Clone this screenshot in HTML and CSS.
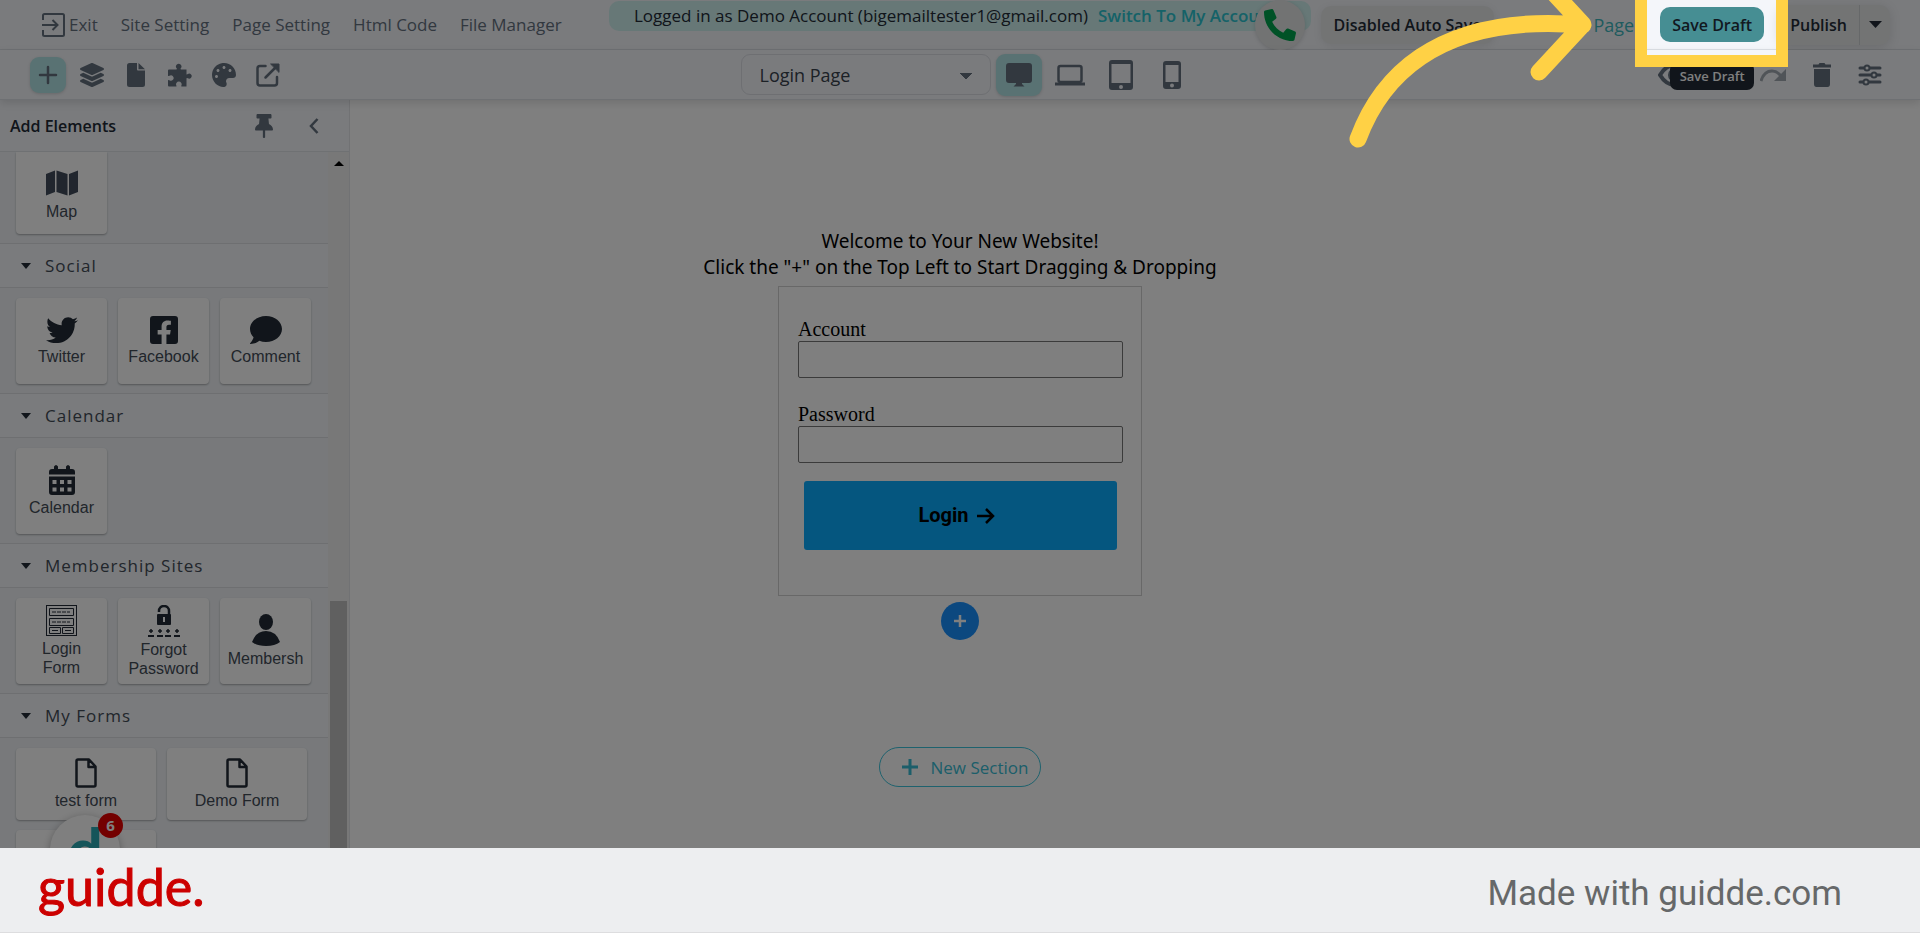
FILE: index.html
```html
<!DOCTYPE html>
<html lang="en">
<head>
    <meta charset="UTF-8">
    <meta name="viewport" content="width=device-width, initial-scale=1.0">
    <title>Login Page - Site Builder</title>
    <link rel="stylesheet" href="styles.css">
</head>
<body>
<div class="stage">
    <header class="topbar">
        <nav class="menu">
            <a href="#" class="exit">
                <svg width="23" height="24" viewBox="0 0 23 24" fill="none" stroke="currentColor" stroke-width="2"><path d="M1 7V2.500Q1 1 2.500 1H20.500Q22 1 22 2.500V21.500Q22 23 20.500 23H2.500Q1 23 1 21.500V17M0 12H15M10.500 7L15.500 12L10.500 17"/></svg>Exit</a>
            <a href="#">Site Setting</a>
            <a href="#">Page Setting</a>
            <a href="#">Html Code</a>
            <a href="#">File Manager</a>
        </nav>
        <div class="account">
            <span>Logged in as Demo Account (bigemailtester1@gmail.com)</span>
            <a href="#">Switch To My Account</a>
            <button class="call" aria-label="Call">
                <svg width="32" height="32" viewBox="0 0 512 512" fill="currentColor"><path transform="translate(512 0) scale(-1 1)" d="M493.400 24.600l-104-24c-11.300-2.600-22.900 3.300-27.500 13.900l-48 112c-4.200 9.800-1.400 21.300 6.900 28l60.600 49.600c-36 76.700-98.900 140.500-177.200 177.200l-49.600-60.600c-6.800-8.300-18.200-11.100-28-6.900l-112 48C3.900 366.500-2 378.100.6 389.400l24 104C27.100 504.200 36.700 512 48 512c256.100 0 464-207.500 464-464 0-11.200-7.700-20.900-18.600-23.400z"/></svg>
            </button>
        </div>
        <div class="actions">
            <button class="auto-save">Disabled Auto Save</button>
            <a href="#" class="page-link">Page</a>
            <div class="save">
                <button class="save-btn">Save Draft</button>
                <span class="tooltip" role="tooltip">Save Draft</span>
                <div class="spotlight"></div>
                <svg class="arrow" width="260" height="160" viewBox="0 0 260 160" fill="none" stroke="#ffd145" stroke-width="17" stroke-linecap="round" stroke-linejoin="round"><path d="M18 139C38 85 90 12 243 25M199 -23L243 24.500L199 72"/></svg>
            </div>
            <div class="publish">
                <button>Publish</button>
                <button class="more" aria-label="More publish options"><svg width="13" height="7" viewBox="0 0 13 7" fill="currentColor"><path d="M0 0H13L6.500 7Z"/></svg></button>
            </div>
        </div>
    </header>

    <div class="toolbar">
        <div class="tools">
            <button class="active" aria-label="Add"><svg width="20" height="20" viewBox="0 0 20 20" stroke="currentColor" stroke-width="2.500" stroke-linecap="round"><path d="M10 2V18M2 10H18"/></svg></button>
            <button aria-label="Layers"><svg width="24" height="24" viewBox="0 0 512 512" fill="currentColor"><path d="M12.410 148.020l232.940 105.670c6.800 3.090 14.490 3.090 21.290 0l232.940-105.670c16.550-7.510 16.550-32.520 0-40.030L266.650 2.310a25.600 25.600 0 0 0-21.290 0L12.410 107.980c-16.550 7.510-16.550 32.530 0 40.040zm487.180 88.280l-58.090-26.330-161.640 73.270c-7.560 3.430-15.590 5.170-23.860 5.170s-16.290-1.740-23.860-5.170L70.510 209.970l-58.100 26.330c-16.550 7.500-16.550 32.500 0 40l232.940 105.590c6.800 3.080 14.490 3.080 21.290 0L499.590 276.300c16.550-7.500 16.550-32.500 0-40zm0 127.800l-57.870-26.230-161.860 73.370c-7.560 3.430-15.590 5.170-23.860 5.170s-16.290-1.740-23.860-5.170L70.290 337.870 12.410 364.100c-16.550 7.500-16.550 32.500 0 40l232.940 105.590c6.800 3.080 14.490 3.080 21.290 0L499.590 404.100c16.550-7.500 16.550-32.500 0-40z"/></svg></button>
            <button aria-label="Pages"><svg width="18" height="24" viewBox="0 0 18 24" fill="currentColor"><path d="M2.500 0H10V6.500Q10 7.500 11 7.500H18V21.500Q18 24 15.500 24H2.500Q0 24 0 21.500V2.500Q0 0 2.500 0ZM11.500 0L18 6.200H11.500Z"/></svg></button>
            <button aria-label="Plugins"><svg width="24" height="24" viewBox="0 0 24 24" fill="currentColor"><path d="M1 6.500H8.500Q9 6 8.700 5.300A2.700 2.700 0 1 1 12.700 5.300Q12.400 6 13 6.500H18.500V11.200Q19 11.800 19.800 11A2.500 2.500 0 1 1 19.800 15.200Q19 14.700 18.500 15.300V23.500H13.500Q12.900 23 13.500 22.200A2.800 2.800 0 1 0 8.200 22.200Q8.800 23 8.300 23.500H1Q0 23.500 0 22.500V17.200Q.6 16.600 1.400 17.200A2.700 2.700 0 1 0 1.400 12.700Q.6 13.300 0 12.800V7.500Q0 6.500 1 6.500Z"/></svg></button>
            <button aria-label="Theme"><svg width="24" height="24" viewBox="0 0 512 512" fill="currentColor"><path d="M204.300 5C104.900 24.400 24.800 104.300 5.200 203.400c-37 187 131.700 326.400 258.800 306.700 41.200-6.400 61.400-54.600 42.500-91.700-23.100-45.400 9.900-98.400 60.900-98.400h79.700c35.800 0 64.800-29.600 64.900-65.300C511.500 97.100 368.100-26.900 204.300 5zM96 320c-17.700 0-32-14.300-32-32s14.300-32 32-32 32 14.300 32 32-14.300 32-32 32zm32-128c-17.700 0-32-14.300-32-32s14.300-32 32-32 32 14.300 32 32-14.300 32-32 32zm128-64c-17.700 0-32-14.300-32-32s14.300-32 32-32 32 14.300 32 32-14.300 32-32 32zm128 64c-17.700 0-32-14.300-32-32s14.300-32 32-32 32 14.300 32 32-14.300 32-32 32z"/></svg></button>
            <button aria-label="Open site"><svg width="24" height="24" viewBox="0 0 24 24" fill="none" stroke="currentColor" stroke-width="2.500" stroke-linecap="round" stroke-linejoin="round"><path d="M9.500 3H4Q1.500 3 1.500 5.500V20Q1.500 22.500 4 22.500H18.500Q21 22.500 21 20V14M9.500 14.500L20 4"/><path d="M15 1H23V9Z" fill="currentColor" stroke-width="1"/></svg></button>
        </div>
        <div class="devices">
            <select aria-label="Page">
                <option>Login Page</option>
            </select>
            <button class="active" aria-label="Desktop"><svg width="26" height="24" viewBox="0 0 26 24" fill="currentColor"><path d="M3 0H23Q26 0 26 3V17Q26 20 23 20H16V21L18.500 23.500H7.500L10 21V20H3Q0 20 0 17V3Q0 0 3 0Z"/></svg></button>
            <button aria-label="Laptop"><svg width="30" height="22" viewBox="0 0 30 22" fill="none" stroke="currentColor"><rect x="3.500" y="2" width="23" height="16" rx="2" stroke-width="2.500"/><path d="M0 20H30" stroke-width="3"/></svg></button>
            <button aria-label="Tablet"><svg width="24" height="30" viewBox="0 0 24 30" fill="currentColor" fill-rule="evenodd"><path d="M3 0H21Q24 0 24 3V27Q24 30 21 30H3Q0 30 0 27V3Q0 0 3 0ZM2.500 4V23H21.500V4ZM12 25A2 2 0 1 0 12 29A2 2 0 1 0 12 25Z"/></svg></button>
            <button aria-label="Phone"><svg width="18" height="28" viewBox="0 0 18 28" fill="currentColor" fill-rule="evenodd"><path d="M3 0H15Q18 0 18 3V25Q18 28 15 28H3Q0 28 0 25V3Q0 0 3 0ZM2.500 4V21H15.500V4ZM9 22.500A2 2 0 1 0 9 26.500A2 2 0 1 0 9 22.500Z"/></svg></button>
        </div>
        <div class="history">
            <button aria-label="Preview"><svg width="34" height="24" viewBox="0 0 34 24" fill="none" stroke="currentColor" stroke-width="4"><path d="M2 12Q8 2 17 2T32 12Q26 22 17 22T2 12Z"/><circle cx="17" cy="12" r="5"/></svg></button>
            <button class="off" aria-label="Redo"><svg width="26" height="14" viewBox="0 0 26 14" fill="none" stroke="currentColor" stroke-width="3"><path d="M1 13Q4 3 12 3Q17 3 21 8"/><path d="M26 1V13H14Z" fill="currentColor" stroke="none"/></svg></button>
            <button aria-label="Delete"><svg width="18" height="24" viewBox="0 0 18 24" fill="currentColor"><path d="M0 1.500H5.500L6.500 0H11.500L12.500 1.500H18V4.500H0ZM1 6H17V21Q17 24 14.500 24H3.500Q1 24 1 21Z"/></svg></button>
            <button aria-label="Options"><svg width="24" height="22" viewBox="0 0 24 22" fill="#f4f6fa" stroke="currentColor" stroke-width="3" stroke-linecap="round"><path d="M2 4H22M2 11H22M2 18H22"/><g stroke-width="2"><circle cx="9" cy="4" r="2.500"/><circle cx="16" cy="11" r="2.500"/><circle cx="8" cy="18" r="2.500"/></g></svg></button>
        </div>
    </div>

    <div class="workspace">
        <aside class="sidebar">
            <div class="side-head">
                <h2>Add Elements</h2>
                <button aria-label="Pin"><svg width="18" height="24" viewBox="0 0 384 512" fill="currentColor"><path d="M298 214L286 96H328c13 0 24-11 24-24V24c0-13-11-24-24-24H56C43 0 32 11 32 24v48c0 13 11 24 24 24h42L86 214C37 237 0 277 0 328c0 13 11 24 24 24h144V490c0 28 48 28 48 0V352h144c13 0 24-11 24-24 0-51-38-91-86-114z"/></svg></button>
                <button aria-label="Collapse"><svg width="10" height="16" viewBox="0 0 10 16" fill="none" stroke="currentColor" stroke-width="2.500"><path d="M8.500 1L2 8L8.500 15"/></svg></button>
            </div>
            <div class="side-body">
                <div class="groups">
                    <div class="tiles first">
                        <button class="tile"><svg width="32" height="26" viewBox="0 0 32 26" fill="#434d5c"><path d="M0 4L9 .5V22L0 25.500ZM10.500 .5L21.500 4V25.500L10.500 22ZM23 4L32 .5V22L23 25.500Z"/></svg><span>Map</span></button>
                    </div>
                    <h3>Social</h3>
                    <div class="tiles">
                        <button class="tile"><svg width="32" height="28" viewBox="0 30 512 448" fill="currentColor"><path d="M459.370 151.716c.325 4.548.325 9.097.325 13.645 0 138.720-105.583 298.558-298.558 298.558-59.452 0-114.680-17.219-161.137-47.106 8.447.974 16.568 1.299 25.340 1.299 49.055 0 94.213-16.568 130.274-44.832-46.132-.975-84.792-31.188-98.112-72.772 6.498.974 12.995 1.624 19.818 1.624 9.421 0 18.843-1.300 27.614-3.573-48.081-9.747-84.143-51.980-84.143-102.985v-1.299c13.969 7.797 30.214 12.670 47.431 13.319-28.264-18.843-46.781-51.005-46.781-87.391 0-19.492 5.197-37.360 14.294-52.954 51.655 63.675 129.300 105.258 216.365 109.807-1.624-7.797-2.599-15.918-2.599-24.040 0-57.828 46.782-104.934 104.934-104.934 30.213 0 57.502 12.670 76.670 33.137 23.715-4.548 46.456-13.320 66.599-25.340-7.798 24.366-24.366 44.833-46.132 57.827 21.117-2.273 41.584-8.122 60.426-16.243-14.292 20.791-32.161 39.308-52.628 54.253z"/></svg><span>Twitter</span></button>
                        <button class="tile"><svg width="28" height="28" viewBox="0 32 448 448" fill="currentColor"><path d="M400 32H48A48 48 0 0 0 0 80v352a48 48 0 0 0 48 48h137.250V327.690h-63V256h63v-54.640c0-62.150 37-96.480 93.670-96.480 27.140 0 55.520 4.840 55.520 4.840v61h-31.270c-30.810 0-40.420 19.120-40.420 38.730V256h68.780l-11 71.690h-57.780V480H400a48 48 0 0 0 48-48V80a48 48 0 0 0-48-48z"/></svg><span>Facebook</span></button>
                        <button class="tile"><svg width="32" height="28" viewBox="0 32 512 448" fill="currentColor"><path d="M256 32C114.600 32 0 125.100 0 240c0 49.600 21.400 95 57 130.700C44.500 421.100 2.700 466 2.200 466.500c-2.200 2.300-2.800 5.700-1.500 8.700S4.800 480 8 480c66.300 0 116-31.800 140.600-51.400 32.700 12.300 69 19.400 107.400 19.400 141.400 0 256-93.100 256-208S397.400 32 256 32z"/></svg><span>Comment</span></button>
                    </div>
                    <h3>Calendar</h3>
                    <div class="tiles">
                        <button class="tile"><svg width="26" height="30" viewBox="0 0 26 30" fill="currentColor" fill-rule="evenodd"><path d="M3 4H5V1.500Q7 -1.500 9 1.500V4H17V1.500Q19 -1.500 21 1.500V4H23Q26 4 26 7V9.500H0V7Q0 4 3 4ZM0 11.500H26V27Q26 30 23 30H3Q0 30 0 27ZM3.500 15V19H7.500V15ZM11 15V19H15V15ZM18.500 15V19H22.500V15ZM3.500 22.500V26.500H7.500V22.500ZM11 22.500V26.500H15V22.500ZM18.500 22.500V26.500H22.500V22.500Z"/></svg><span>Calendar</span></button>
                    </div>
                    <h3>Membership Sites</h3>
                    <div class="tiles">
                        <button class="tile"><svg width="31" height="31" viewBox="0 0 31 31" fill="none" stroke="currentColor"><rect x=".5" y=".5" width="30" height="30"/><path d="M3.500 3.500H27.500V10.500H3.500ZM3.500 13.500H27.500V20.500H3.500ZM3.500 22.500H14.500V28.500H3.500ZM16.500 22.500H27.500V28.500H16.500Z"/><path stroke-dasharray="4 1" d="M6 7H24M6 17H24"/><path d="M6 25.500H12M19 25.500H25"/></svg><span>Login Form</span></button>
                        <button class="tile"><svg width="32" height="32" viewBox="0 0 32 32" fill="none" stroke="currentColor"><path d="M11 7V6A5 5 0 0 1 21 6V10" stroke-width="2.500"/><rect x="9" y="9" width="14" height="11" rx="1" fill="currentColor" stroke="none"/><path d="M16 12V17" stroke="#fff" stroke-width="2"/><path stroke-width="2" d="M0 31H6M9 31H15M17 31H23M26 31H32"/><path stroke-width="1.500" d="M1 26H5M3 24V28M10 26H14M12 24V28M18 26H22M20 24V28M27 26H31M29 24V28"/></svg><span>Forgot Password</span></button>
                        <button class="tile"><svg width="28" height="32" viewBox="0 0 28 32" fill="currentColor"><ellipse cx="14" cy="8" rx="7" ry="8"/><path d="M0 28Q4 17 14 17T28 28Q23 32 14 32T0 28Z"/></svg><span>Membersh</span></button>
                    </div>
                    <h3>My Forms</h3>
                    <div class="tiles wide">
                        <button class="tile"><svg width="22" height="30" viewBox="0 0 22 30" fill="none" stroke="currentColor" stroke-width="2.500" stroke-linejoin="round"><path d="M1.500 3Q1.500 1.500 3 1.500H14L20.500 8.500V27Q20.500 28.500 19 28.500H3Q1.500 28.500 1.500 27ZM13.500 2V9H20.500"/></svg><span>test form</span></button>
                        <button class="tile"><svg width="22" height="30" viewBox="0 0 22 30" fill="none" stroke="currentColor" stroke-width="2.500" stroke-linejoin="round"><path d="M1.500 3Q1.500 1.500 3 1.500H14L20.500 8.500V27Q20.500 28.500 19 28.500H3Q1.500 28.500 1.500 27ZM13.500 2V9H20.500"/></svg><span>Demo Form</span></button>
                        <button class="tile" aria-label="Form"></button>
                    </div>
                </div>
                <div class="scrollbar">
                    <svg width="10" height="5" viewBox="0 0 10 5"><path d="M0 5L5 0L10 5Z"/></svg>
                    <div class="thumb"></div>
                </div>
            </div>
        </aside>

        <main class="canvas">
            <p class="welcome">Welcome to Your New Website!<br>Click the "+" on the Top Left to Start Dragging &amp; Dropping</p>
            <form class="login">
                <label for="account">Account</label>
                <input type="text" id="account">
                <label for="password">Password</label>
                <input type="password" id="password">
                <button type="button">Login <svg width="18" height="16" viewBox="0 0 18 16" fill="none" stroke="currentColor" stroke-width="2.500"><path d="M0 8H16M9 1L16 8L9 15"/></svg></button>
            </form>
            <button class="add-row" aria-label="Add row"><svg width="12" height="12" viewBox="0 0 12 12" stroke="currentColor" stroke-width="2.500"><path d="M6 0V12M0 6H12"/></svg></button>
            <button class="new-section"><svg width="16" height="16" viewBox="0 0 16 16" stroke="currentColor" stroke-width="3"><path d="M8 0V16M0 8H16"/></svg>New Section</button>
        </main>
    </div>

    <button class="chat" aria-label="Open chat">d<span class="badge">6</span></button>
</div>

<footer class="footer">
    <a href="#" class="brand">guidde.</a>
    <span>Made with guidde.com</span>
</footer>
</body>
</html>
```
FILE: styles.css
```css
* {
    box-sizing: border-box;
}

body {
    margin: 0;
    height: 100vh;
    display: flex;
    flex-direction: column;
    font-family: "Open Sans", "Noto Sans", sans-serif;
    font-size: 16px;
    color: #222b36;
    overflow: hidden;
}

a {
    text-decoration: none;
    color: inherit;
}

button {
    border: 0;
    padding: 0;
    background: none;
    font: inherit;
    color: inherit;
    cursor: pointer;
}

svg {
    flex: none;
}

.stage {
    position: relative;
    flex: 1;
    min-height: 0;
    display: flex;
    flex-direction: column;
    overflow: hidden;
    background: #fff;
}

/* top bar */
.topbar,
.toolbar {
    display: grid;
    grid-template-columns: 1fr auto 1fr;
    align-items: center;
    height: 50px;
    flex: none;
    background: #f4f6fa;
    border-bottom: 1px solid #dde1e6;
    color: #64717f;
}

.menu {
    display: flex;
    align-items: center;
    gap: 23px;
    padding-left: 42px;
    font-size: 17px;
    white-space: nowrap;
}

.exit {
    display: flex;
    align-items: center;
    gap: 4px;
}

.account {
    position: relative;
    display: flex;
    align-items: center;
    align-self: start;
    gap: 10px;
    width: 702px;
    height: 30px;
    margin-top: 1px;
    padding: 0 0 1px 25px;
    border-radius: 10px;
    background: #cef0ee;
    color: #222b36;
    font-size: 17px;
    white-space: nowrap;
}

.account a {
    color: #2ac4d0;
    font-weight: 600;
}

.call {
    position: absolute;
    right: 6px;
    top: -1px;
    width: 50px;
    height: 50px;
    display: grid;
    place-items: center;
    border-radius: 50%;
    background: #e4e6e6;
    color: #00a44f;
    box-shadow: 0 1px 4px rgba(0, 0, 0, 0.15);
}

.actions {
    display: flex;
    align-items: center;
    padding: 0 30px 0 10px;
    font-weight: 600;
    color: #222b36;
    white-space: nowrap;
}

.auto-save {
    width: 173px;
    height: 38px;
    margin-right: auto;
    border-radius: 10px;
    background: #e6e8e9;
    box-shadow: 0 2px 8px rgba(0, 0, 0, 0.08);
}

.page-link {
    margin-right: 26px;
    color: #3fb6be;
    font-weight: 400;
    font-size: 18px;
}

.save {
    position: relative;
    margin-right: 14px;
}

.save-btn {
    display: block;
    width: 104px;
    height: 35px;
    border-radius: 10px;
    background: #468e93;
    color: #12181f;
}

.tooltip {
    position: absolute;
    top: 55px;
    left: 10px;
    width: 84px;
    padding: 4px 0;
    border-radius: 7px;
    background: #222b36;
    color: #fff;
    font-size: 13px;
    line-height: 20px;
    text-align: center;
    z-index: 5;
}

/* lit box, everything outside it is dimmed */
.spotlight {
    position: absolute;
    top: -24px;
    left: -25px;
    width: 153px;
    height: 84px;
    border: 12px solid #ffd145;
    box-shadow: 0 0 0 3000px rgba(0, 0, 0, 0.5);
    pointer-events: none;
    z-index: 10;
}

.arrow {
    position: absolute;
    top: -7px;
    right: 164px;
    z-index: 11;
    pointer-events: none;
}

.publish {
    display: flex;
    height: 40px;
    border-radius: 10px;
    background: #e6e8e9;
    box-shadow: 0 2px 12px rgba(0, 0, 0, 0.12);
}

.publish button {
    padding: 0 12px;
}

.publish .more {
    width: 31px;
    padding: 0;
    border-left: 1px solid #cdd0d2;
    display: grid;
    place-items: center;
}

/* second bar */
.toolbar {
    box-shadow: 0 3px 8px rgba(0, 0, 0, 0.12);
    position: relative;
}

.tools,
.devices,
.history {
    display: flex;
    align-items: center;
}

.tools button,
.devices button,
.history button {
    display: grid;
    place-items: center;
}

.tools {
    gap: 8px;
    padding-left: 30px;
}

.tools button {
    width: 36px;
    height: 36px;
    border-radius: 9px;
}

.toolbar .active {
    background: #b3e4e6;
    box-shadow: 0 1px 3px rgba(0, 0, 0, 0.15);
}

.devices {
    gap: 5px;
    padding-left: 15px;
}

.devices button {
    width: 46px;
    height: 42px;
    border-radius: 9px;
}

.devices select {
    appearance: none;
    width: 250px;
    height: 41px;
    padding: 0 18px;
    border: 1px solid #dcdfe5;
    border-radius: 9px;
    background: linear-gradient(to bottom right, #64717f 50%, transparent 51%) 224px 18px / 6px 6px no-repeat,
        linear-gradient(to bottom left, #64717f 50%, transparent 51%) 218px 18px / 6px 6px no-repeat,
        #f4f6fa;
    color: #39424d;
    font-family: inherit;
    font-size: 18px;
}

.history {
    justify-content: flex-end;
    padding-right: 38px;
}

.history button {
    margin-left: 27px;
}

.history .off {
    margin-left: 68px;
    color: #a0a8b0;
}

/* sidebar */
.workspace {
    flex: 1;
    min-height: 0;
    display: flex;
}

.sidebar {
    width: 350px;
    display: flex;
    flex-direction: column;
    background: #f4f6fa;
    border-right: 1px solid #e2e4e8;
}

.side-head {
    display: flex;
    align-items: center;
    flex: none;
    height: 52px;
    padding: 0 30px 0 10px;
    border-bottom: 1px solid #dfe2e6;
    color: #64717f;
}

.side-head h2 {
    margin: 0;
    flex: 1;
    font-size: 16px;
    font-weight: 600;
    color: #222b36;
}

.side-head button {
    margin-left: 36px;
    line-height: 0;
}

.side-body {
    flex: 1;
    min-height: 0;
    display: flex;
    overflow: hidden;
}

.groups {
    flex: 1;
}

.groups h3 {
    display: flex;
    align-items: center;
    gap: 14px;
    margin: 0;
    height: 45px;
    padding-left: 21px;
    border-top: 1px solid #dcdfe3;
    border-bottom: 1px solid #dcdfe3;
    font-size: 17px;
    font-weight: 400;
    letter-spacing: 1px;
    color: #434c57;
}

.groups h3::before {
    content: "";
    border: 5px solid transparent;
    border-top: 6px solid #222b36;
    border-bottom: 0;
}

.tiles {
    display: flex;
    flex-wrap: wrap;
    gap: 10px 11px;
    padding: 10px 0 9px 16px;
    background: #f0f3f7;
}

.tiles.first {
    padding-top: 0;
}

.tile {
    width: 91px;
    height: 86px;
    display: flex;
    flex-direction: column;
    align-items: center;
    justify-content: center;
    gap: 3px;
    padding: 0 7px;
    border-radius: 4px;
    background: #fff;
    box-shadow: 0 1px 2px rgba(0, 0, 0, 0.3);
    font-family: "Liberation Sans", Arial, sans-serif;
    line-height: 19px;
}

.tile span {
    color: #434c57;
}

.first .tile {
    height: 82px;
    gap: 6px;
    padding-top: 5px;
    border-radius: 0 0 4px 4px;
}

.wide .tile {
    width: 140px;
    height: 72px;
}

.scrollbar {
    width: 21px;
    display: flex;
    flex-direction: column;
    align-items: center;
    background: #f1f1f1;
}

.scrollbar svg {
    margin: 9px 0 435px;
}

.thumb {
    flex: 1;
    width: 17px;
    background: #c1c1c1;
}

/* canvas */
.canvas {
    flex: 1;
    display: flex;
    flex-direction: column;
    align-items: center;
    padding: 128px 350px 0 0;
    color: #000;
}

.welcome {
    margin: 0 0 6px;
    font-family: "Noto Sans", sans-serif;
    font-size: 19px;
    line-height: 26px;
    text-align: center;
}

.login {
    width: 364px;
    height: 310px;
    display: flex;
    flex-direction: column;
    padding: 31px 18px 0 19px;
    border: 1px solid #d0d0d0;
    font-family: "Liberation Serif", "Times New Roman", serif;
    font-size: 20px;
    line-height: 23px;
}

.login input {
    height: 37px;
    margin-bottom: 25px;
    border: 1px solid #767676;
    border-radius: 2px;
    background: #fff;
}

.login #password {
    margin-bottom: 18px;
}

.login button {
    height: 69px;
    margin: 0 6px;
    display: flex;
    align-items: center;
    justify-content: center;
    gap: 8px;
    padding-right: 8px;
    border-radius: 3px;
    background: #0aacff;
    font-family: Roboto, sans-serif;
    font-weight: 700;
}

.add-row {
    width: 38px;
    height: 38px;
    margin-top: 6px;
    border-radius: 50%;
    display: grid;
    place-items: center;
    background: #1890ff;
    color: #fff;
}

.new-section {
    display: flex;
    align-items: center;
    gap: 13px;
    height: 40px;
    margin-top: 107px;
    padding: 0 12px 0 22px;
    border: 1px solid #3cc4dc;
    border-radius: 20px;
    color: #38bcd4;
    font-size: 17px;
}

/* chat bubble */
.chat {
    position: absolute;
    left: 50px;
    bottom: -37px;
    width: 70px;
    height: 70px;
    border-radius: 50%;
    background: #fff;
    box-shadow: 0 2px 8px rgba(0, 0, 0, 0.3);
    color: #2aaab4;
    font-family: Lato, sans-serif;
    font-size: 64px;
    font-weight: 700;
    line-height: 70px;
}

.badge {
    position: absolute;
    top: -2px;
    right: -3px;
    width: 25px;
    height: 25px;
    border-radius: 50%;
    background: #e60000;
    color: #fff;
    font-family: "Open Sans", sans-serif;
    font-size: 15px;
    line-height: 25px;
}

/* footer */
.footer {
    flex: none;
    display: flex;
    align-items: center;
    justify-content: space-between;
    height: 85px;
    padding: 0 78px 0 38px;
    border-bottom: 1px solid #dddddf;
    background: #edeef0;
    font-family: Roboto, sans-serif;
    font-size: 35px;
    color: #666869;
}

.footer span {
    padding-top: 7px;
}

.brand {
    padding-bottom: 8px;
    font-family: Lato, sans-serif;
    font-size: 52px;
    line-height: 60px;
    -webkit-text-stroke: 1px #cc0000;
    color: #cc0000;
}
```
